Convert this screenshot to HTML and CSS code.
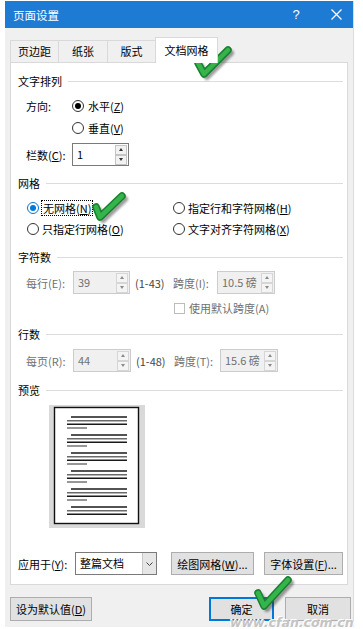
FILE: index.html
```html
<!DOCTYPE html>
<html lang="zh">
<head>
<meta charset="utf-8">
<title>页面设置</title>
<link rel="stylesheet" href="styles.css">
</head>
<body>
<div class="dialog">
  <div class="titlebar">
    <span class="title">页面设置</span>
    <span class="help">?</span>
    <span class="close"><svg width="11" height="11" viewBox="0 0 11 11"><path d="M0.5 0.5 L10.5 10.5 M10.5 0.5 L0.5 10.5" stroke="#fff" stroke-width="1.2" fill="none"/></svg></span>
  </div>
  <div class="tabs">
    <div class="tab t1">页边距</div>
    <div class="tab t2">纸张</div>
    <div class="tab t3">版式</div>
    <div class="tab active">文档网格</div>
  </div>
  <div class="panel">
    <div class="gtitle g-first"><span>文字排列</span><i></i></div>
    <div class="row r-dir">
      <span class="lbl">方向:</span>
      <span class="radio on"></span><span>水平(<u>Z</u>)</span>
    </div>
    <div class="row r-vert">
      <span class="radio"></span><span>垂直(<u>V</u>)</span>
    </div>
    <div class="row r-cols">
      <span class="lbl">栏数(<u>C</u>):</span>
      <span class="spin w57"><span class="val">1</span><span class="btns"><b class="up"></b><b class="dn"></b></span></span>
    </div>

    <div class="gtitle g-grid"><span>网格</span><i></i></div>
    <div class="row grow g1">
      <span class="gcol"><span class="radio blue"></span><span class="focus">无网格(<u>N</u>)</span></span>
      <span class="gcol"><span class="radio"></span><span>指定行和字符网格(<u>H</u>)</span></span>
    </div>
    <div class="row grow g2">
      <span class="gcol"><span class="radio"></span><span>只指定行网格(<u>O</u>)</span></span>
      <span class="gcol"><span class="radio"></span><span>文字对齐字符网格(<u>X</u>)</span></span>
    </div>

    <div class="gtitle g-chars"><span>字符数</span><i></i></div>
    <div class="row r-num">
      <span class="lbl dis w47">每行(E):</span>
      <span class="spin w57 off"><span class="val">39</span><span class="btns"><b class="up"></b><b class="dn"></b></span></span>
      <span class="range">(1-43)</span>
      <span class="lbl dis w44">跨度(I):</span>
      <span class="spin w58 off"><span class="val">10.5 磅</span><span class="btns"><b class="up"></b><b class="dn"></b></span></span>
    </div>
    <div class="row r-chk">
      <span class="chk"></span><span class="dis">使用默认跨度(A)</span>
    </div>

    <div class="gtitle g-lines"><span>行数</span><i></i></div>
    <div class="row r-num r-num2">
      <span class="lbl dis w47">每页(R):</span>
      <span class="spin w58 off"><span class="val">44</span><span class="btns"><b class="up"></b><b class="dn"></b></span></span>
      <span class="range r2">(1-48)</span>
      <span class="lbl dis w46">跨度(T):</span>
      <span class="spin w58 off"><span class="val">15.6 磅</span><span class="btns"><b class="up"></b><b class="dn"></b></span></span>
    </div>

    <div class="gtitle g-prev"><span>预览</span><i></i></div>
    <div class="preview">
      <svg width="96" height="123" viewBox="0 0 96 123">
        <rect x="0" y="0" width="96" height="123" fill="#d9d9d9"/>
        <rect x="5.5" y="2.5" width="84" height="116" fill="#fff" stroke="#111" stroke-width="1.4"/>
        <g stroke-width="1.4">
          <g transform="translate(5,2)">
            <line x1="17" y1="10" x2="73" y2="10" stroke="#1a1a1a"/>
            <line x1="13" y1="13.7" x2="73" y2="13.7" stroke="#6a6a6a"/>
            <line x1="13" y1="17.3" x2="73" y2="17.3" stroke="#1a1a1a"/>
            <line x1="13" y1="21" x2="33" y2="21" stroke="#6a6a6a"/>
          </g>
          <g transform="translate(5,20)">
            <line x1="17" y1="10" x2="73" y2="10" stroke="#1a1a1a"/>
            <line x1="13" y1="13.7" x2="73" y2="13.7" stroke="#6a6a6a"/>
            <line x1="13" y1="17.3" x2="73" y2="17.3" stroke="#1a1a1a"/>
            <line x1="13" y1="21" x2="33" y2="21" stroke="#6a6a6a"/>
          </g>
          <g transform="translate(5,38)">
            <line x1="17" y1="10" x2="73" y2="10" stroke="#1a1a1a"/>
            <line x1="13" y1="13.7" x2="73" y2="13.7" stroke="#6a6a6a"/>
            <line x1="13" y1="17.3" x2="73" y2="17.3" stroke="#1a1a1a"/>
            <line x1="13" y1="21" x2="33" y2="21" stroke="#6a6a6a"/>
          </g>
          <g transform="translate(5,56)">
            <line x1="17" y1="10" x2="73" y2="10" stroke="#1a1a1a"/>
            <line x1="13" y1="13.7" x2="73" y2="13.7" stroke="#6a6a6a"/>
            <line x1="13" y1="17.3" x2="73" y2="17.3" stroke="#1a1a1a"/>
            <line x1="13" y1="21" x2="33" y2="21" stroke="#6a6a6a"/>
          </g>
          <g transform="translate(5,74)">
            <line x1="17" y1="10" x2="73" y2="10" stroke="#1a1a1a"/>
            <line x1="13" y1="13.7" x2="73" y2="13.7" stroke="#6a6a6a"/>
            <line x1="13" y1="17.3" x2="73" y2="17.3" stroke="#1a1a1a"/>
            <line x1="13" y1="21" x2="33" y2="21" stroke="#6a6a6a"/>
          </g>
          <g transform="translate(5,92)">
            <line x1="17" y1="10" x2="73" y2="10" stroke="#1a1a1a"/>
            <line x1="13" y1="13.7" x2="73" y2="13.7" stroke="#6a6a6a"/>
            <line x1="13" y1="17.3" x2="73" y2="17.3" stroke="#1a1a1a"/>
          </g>
        </g>
      </svg>
    </div>

    <div class="row r-apply">
      <span class="lbl w57">应用于(<u>Y</u>):</span>
      <span class="combo"><span class="val">整篇文档</span><span class="drop"><svg width="7" height="4" viewBox="0 0 7 4"><path d="M0.5 0.5 L3.5 3.5 L6.5 0.5" stroke="#444" fill="none"/></svg></span></span>
      <span class="btn b-draw">绘图网格(<u>W</u>)...</span>
      <span class="btn b-font">字体设置(<u>F</u>)...</span>
    </div>
  </div>
  <div class="footer">
    <span class="btn b-def">设为默认值(<u>D</u>)</span>
    <span class="btn b-ok">确定</span>
    <span class="btn b-cancel">取消</span>
  </div>
</div>

<svg class="check c1" width="44" height="40" viewBox="0 0 44 40">
  <polyline points="9,22 15,33 39,9" class="sh"/>
  <polyline points="6,19 12,30 36,6" class="edge"/>
  <polyline points="6,19 12,30 36,6" class="fillg"/>
</svg>
<svg class="check c2" width="40" height="36" viewBox="0 0 40 36">
  <polyline points="9,20 13,30 35,9" class="sh"/>
  <polyline points="6,17 10,27 32,6" class="edge"/>
  <polyline points="6,17 10,27 32,6" class="fillg"/>
</svg>
<svg class="check c3" width="44" height="40" viewBox="0 0 44 40">
  <polyline points="9,21 15,34 39,8" class="sh"/>
  <polyline points="6,18 12,31 36,5" class="edge"/>
  <polyline points="6,18 12,31 36,5" class="fillg"/>
</svg>

<div class="watermark">www.cfan.com.cn</div>
</body>
</html>
```
FILE: styles.css
```css
* { box-sizing: border-box; }
html, body { margin: 0; padding: 0; }
body {
  width: 363px;
  height: 629px;
  overflow: hidden;
  position: relative;
  background: #fff;
  font-family: "Noto Sans CJK SC", "Microsoft YaHei", sans-serif;
  font-size: 11px;
  line-height: 16px;
  color: #000;
}
u { text-decoration: underline; text-underline-offset: 1px; }

.dialog {
  margin: 1px 0 0 5px;
  width: 349px;
  height: 626px;
  background: #f0f0f0;
  border-right: 1px solid #dcdcdc;
}

.titlebar {
  height: 27px;
  background: #1e7bd3;
  color: #fff;
  display: flex;
  align-items: center;
  padding-left: 8px;
  font-size: 11.5px;
}
.title { flex: 1; }
.help { width: 46px; text-align: center; font-size: 13px; font-family: "Liberation Sans", sans-serif; }
.close { width: 34px; display: flex; justify-content: center; align-items: center; }

.tabs {
  height: 34px;
  display: flex;
  align-items: flex-end;
  padding-left: 5px;
}
.tab {
  height: 22px;
  border: 1px solid #d9d9d9;
  border-bottom: 0;
  margin-right: -1px;
  text-align: center;
  line-height: 21px;
  background: #f0f0f0;
}
.t1 { width: 49px; }
.t2 { width: 50px; }
.t3 { width: 49px; }
.tab.active {
  width: 63px;
  height: 26px;
  line-height: 24px;
  margin-bottom: -1px;
  background: #fff;
  position: relative;
  z-index: 1;
}

.panel {
  margin-left: 5px;
  width: 338px;
  height: 523px;
  background: #fff;
  border: 1px solid #d9d9d9;
  padding: 10px 4px 0 7px;
}

.gtitle {
  height: 16px;
  display: flex;
  align-items: center;
}
.gtitle i {
  flex: 1;
  height: 1px;
  background: #dcdcdc;
  margin-left: 6px;
}
.g-grid { margin-top: 9px; }
.g-chars { margin-top: 10px; }
.g-lines { margin-top: 9px; }
.g-prev { margin-top: 10px; }

.row { display: flex; align-items: center; }
.lbl { width: 46px; flex: none; white-space: nowrap; }
.w47 { width: 47px; }
.w44 { width: 44px; }
.w46 { width: 46px; }
.w57 { width: 57px; }
.w58 { width: 58px; }
.dis { color: #707070; }

.radio {
  width: 12px;
  height: 12px;
  border: 1px solid #333;
  border-radius: 50%;
  background: #fff;
  margin-right: 4px;
  flex: none;
  display: flex;
  align-items: center;
  justify-content: center;
}
.radio.on::after {
  content: "";
  width: 6px;
  height: 6px;
  border-radius: 50%;
  background: #000;
}
.radio.blue { border-color: #0078d7; }
.radio.blue::after {
  content: "";
  width: 6px;
  height: 6px;
  border-radius: 50%;
  background: #0078d7;
}

.r-dir { margin-top: 7px; height: 20px; padding-left: 8px; }
.r-vert { margin-top: 2px; height: 20px; padding-left: 54px; }
.r-cols { margin-top: 5px; height: 23px; padding-left: 8px; }

.grow { height: 20px; padding-left: 9px; }
.g1 { margin-top: 7px; }
.g2 { margin-top: 1px; }
.gcol { display: flex; align-items: center; }
.gcol:first-child { width: 146px; }
.gcol .radio { margin-right: 3px; }
.focus { outline: 1px dotted #000; outline-offset: 0; padding: 0 1px; line-height: 14px; }

.spin {
  height: 23px;
  border: 1px solid #7a7a7a;
  background: #fff;
  display: flex;
  align-items: stretch;
  flex: none;
}
.spin .val { flex: 1; padding-left: 4px; line-height: 20px; white-space: nowrap; }
.spin .btns {
  width: 12px;
  margin: 0 1px 0 0;
  display: flex;
  flex-direction: column;
  justify-content: center;
}
.spin .btns b {
  height: 10px;
  border: 1px solid #c4c4c4;
  background: #f2f2f2;
  display: flex;
  align-items: center;
  justify-content: center;
}
.spin .btns b::after {
  content: "";
  width: 0;
  height: 0;
  border-left: 2.5px solid transparent;
  border-right: 2.5px solid transparent;
}
.spin .btns b.up::after { border-bottom: 3px solid #333; }
.spin .btns b.dn::after { border-top: 3px solid #333; }
.spin.off { border-color: #cccccc; background: #f0f0f0; color: #707070; }
.spin.off .btns b { border-color: #d6d6d6; background: #f4f4f4; }
.spin.off .btns b.up::after { border-bottom-color: #8a8a8a; }
.spin.off .btns b.dn::after { border-top-color: #8a8a8a; }

.r-num { margin-top: 6px; height: 23px; padding-left: 8px; }
.r-num2 { margin-top: 7px; }
.range { width: 38px; margin-left: 5px; color: #444; flex: none; }

.r-chk { margin-top: 5px; height: 18px; padding-left: 156px; }
.chk {
  width: 11px;
  height: 11px;
  border: 1px solid #bcbcbc;
  background: #fff;
  margin-right: 4px;
}

.preview { margin-top: 7px; margin-left: 31px; width: 96px; height: 123px; }
.preview svg { display: block; }

.r-apply { margin-top: 24px; height: 23px; }
.combo {
  width: 82px;
  height: 23px;
  border: 1px solid #7a7a7a;
  background: #fff;
  display: flex;
}
.combo .val { flex: 1; padding-left: 4px; line-height: 21px; }
.combo .drop {
  width: 14px;
  background: #e6e6e6;
  border-left: 1px solid #c8c8c8;
  display: flex;
  align-items: center;
  justify-content: center;
}
.combo .drop svg { display: block; }

.btn {
  height: 23px;
  border: 1px solid #adadad;
  background: #e1e1e1;
  display: flex;
  align-items: center;
  justify-content: center;
  white-space: nowrap;
  flex: none;
  line-height: 14px;
}
.b-draw { width: 83px; margin-left: 14px; }
.b-font { width: 79px; margin-left: 10px; }

.footer {
  margin-top: 12px;
  height: 24px;
  display: flex;
  padding-left: 5px;
}
.footer .btn { height: 24px; }
.b-def { width: 82px; }
.b-ok {
  width: 65px;
  margin-left: auto;
  border: 2px solid #0078d7;
}
.b-cancel { width: 66px; margin-left: 11px; margin-right: 2px; }

.check { position: absolute; overflow: visible; }
.c1 { left: 192px; top: 44px; }
.c2 { left: 90px; top: 190px; }
.c3 { left: 252px; top: 575px; }
.check polyline { fill: none; stroke-linecap: round; stroke-linejoin: round; }
.check .sh { stroke: rgba(40,40,40,0.45); stroke-width: 6px; filter: blur(1.2px); }
.check .edge { stroke: #17802f; stroke-width: 7.5px; }
.check .fillg { stroke: #36b44c; stroke-width: 4.5px; }

.watermark {
  position: absolute;
  left: 230px;
  top: 617px;
  font-family: "DejaVu Sans", sans-serif;
  font-weight: bold;
  font-style: italic;
  font-size: 12.5px;
  line-height: 12px;
  color: #c4c4c4;
  text-shadow: 1px 1px 0 #fff, -1px -1px 0 #fff;
  white-space: nowrap;
}
```
